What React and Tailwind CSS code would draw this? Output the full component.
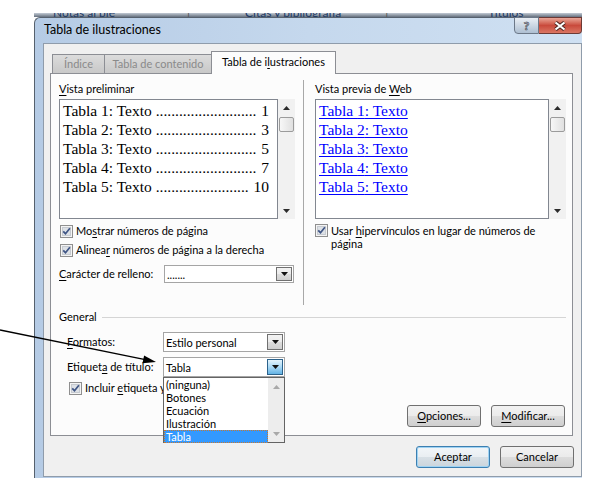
import React from "react";

const btnGray =
  "bg-[linear-gradient(#f2f2f2_0%,#ebebeb_50%,#dddddd_50%,#cfcfcf_100%)]";

const U = ({ children }) => (
  <span className="underline decoration-1 underline-offset-[2px]">{children}</span>
);

function Tri({ up = false, color = "#2b2b2b" }) {
  return (
    <svg width="7" height="4" viewBox="0 0 7 4" className="shrink-0">
      <path d={up ? "M0 4 L3.5 0 L7 4Z" : "M0 0 L7 0 L3.5 4Z"} fill={color} />
    </svg>
  );
}

function Box() {
  return (
    <svg width="13" height="13" viewBox="0 0 13 13" className="shrink-0">
      <rect x="0.5" y="0.5" width="12" height="12" fill="#f4f4f4" stroke="#8f8f8f" />
      <rect x="2.5" y="2.5" width="8" height="8" fill="#dde1e6" stroke="#c6cad0" />
      <path d="M3.2 6.3 L5.5 8.7 L9.9 3.3" fill="none" stroke="#3f5585" strokeWidth="1.7" />
    </svg>
  );
}

function PreviewScroll() {
  return (
    <div className="flex h-[120px] w-[17px] flex-col items-center bg-[#f1f1f1]">
      <div className="flex h-[17px] items-center">
        <Tri up />
      </div>
      <div className="mt-px h-[15px] w-[15px] rounded-[2px] border border-[#9b9b9b] bg-gradient-to-r from-[#f7f7f7] to-[#e0e0e0]" />
      <div className="flex-1" />
      <div className="flex h-[17px] items-center">
        <Tri />
      </div>
    </div>
  );
}

function Combo({ value, active = false, size = "h-[20px] w-[122px]", children }) {
  return (
    <div className={`relative flex ${size} border border-[#a5a5a5] bg-white`}>
      <div className="flex flex-1 items-center pl-[2px] leading-none">{value}</div>
      <div
        className={
          active
            ? "m-px flex w-[16px] items-center justify-center border border-[#2c628b] bg-gradient-to-b from-[#e5f4fc] via-[#a9d9f5] to-[#62b2e4]"
            : `m-px flex w-[16px] items-center justify-center border border-[#707070] ${btnGray}`
        }
      >
        <Tri color="#111" />
      </div>
      {children}
    </div>
  );
}

const pages = [
  ["1", "1", 26],
  ["2", "3", 26],
  ["3", "5", 26],
  ["4", "7", 26],
  ["5", "10", 24],
];

const labels = ["(ninguna)", "Botones", "Ecuación", "Ilustración", "Tabla"];

export default function App() {
  return (
    <div className="relative h-[484px] w-[589px] overflow-hidden bg-white font-['Lato','Liberation_Sans',sans-serif] text-[11px] text-black">
      {/* ribbon of the document window behind the dialog */}
      <div className="ml-[34px] mt-[13px] flex h-[4px] w-[548px] items-start overflow-hidden bg-gradient-to-b from-[#c3cbd5] to-[#66717f] text-[12px] leading-[14px] text-[#1e3a66]">
        <span className="-mt-[7px] ml-[19px]">Notas al pie</span>
        <span className="-mt-[7px] ml-[72px] text-[#555]">|</span>
        <span className="-mt-[7px] ml-[55px]">Citas y bibliografía</span>
        <span className="-mt-[7px] ml-[44px] text-[#555]">|</span>
        <span className="-mt-[7px] ml-[100px]">Títulos</span>
      </div>

      {/* dialog window */}
      <div className="ml-[34px] h-[461px] w-[548px] rounded-tl-[6px] border-l border-t border-[#56616e] bg-gradient-to-r from-[#b5cbe5] via-[#c5d8ed] to-[#cfe0f2]">
        <div className="flex h-[25px] items-start justify-between">
          <div className="self-center pl-[9px] text-[12.5px] leading-none">Tabla de ilustraciones</div>
          <div className="-mt-px flex">
            <div className="flex h-[17px] w-[25px] items-center justify-center rounded-bl-[4px] border border-[#6c7888] bg-gradient-to-b from-[#eaeff5] to-[#aebfd2] text-[12px] font-bold leading-none text-white [-webkit-text-stroke:0.7px_#39424f]">
              ?
            </div>
            <div className="flex h-[17px] w-[43px] items-center justify-center rounded-br-[4px] border border-l-0 border-[#6d3a35] bg-gradient-to-b from-[#e8a597] via-[#c94a3c] to-[#da7563]">
              <svg width="14" height="10" viewBox="0 0 14 10">
                <path d="M2.5 1.5 L11.5 8.5 M11.5 1.5 L2.5 8.5" stroke="#4a2420" strokeWidth="4" />
                <path d="M2.5 1.5 L11.5 8.5 M11.5 1.5 L2.5 8.5" stroke="#fff" strokeWidth="2.2" />
              </svg>
            </div>
          </div>
        </div>

        {/* client area */}
        <div className="ml-[8px] h-[434px] w-[539px] border border-[#8f9cab] bg-[#f0f0f0]">
          <div className="ml-[8px] mt-[7px] flex h-[22px] items-end">
            <div className="flex h-[19px] w-[53px] items-center justify-center border border-b-0 border-[#8c8e94] bg-gradient-to-b from-[#dcdcdc] to-[#c8c8c8] text-[#8a8a8a]">
              Índice
            </div>
            <div className="-ml-px flex h-[19px] w-[108px] items-center justify-center border border-b-0 border-[#8c8e94] bg-gradient-to-b from-[#dcdcdc] to-[#c8c8c8] text-[#8a8a8a]">
              Tabla de contenido
            </div>
            <div className="relative z-10 -mb-px -ml-px flex h-[23px] w-[125px] items-center justify-center border border-b-0 border-[#8c8e94] bg-[#fcfcfc] pb-[2px]">
              <span>
                Tabla de i<U>l</U>ustraciones
              </span>
            </div>
          </div>

          {/* tab panel */}
          <div className="ml-[6px] h-[363px] w-[523px] border border-[#8c8e94] bg-[#fcfcfc] pl-[8px] pt-[6px]">
            <div className="flex h-[225px]">
              {/* print preview */}
              <div className="w-[236px]">
                <div className="h-[18px] leading-[18px]">
                  <U>V</U>ista preliminar
                </div>
                <div className="mt-px flex">
                  <div className="h-[120px] w-[219px] border border-[#828790] bg-white pl-[3px] pr-[8px] pt-px font-['Liberation_Serif',serif] text-[15.5px] leading-[19px]">
                    {pages.map(([n, p, d]) => (
                      <div key={n} className="flex h-[19px] justify-between whitespace-nowrap">
                        <span>
                          Tabla {n}: Texto {".".repeat(d)}
                        </span>
                        <span>{p}</span>
                      </div>
                    ))}
                  </div>
                  <PreviewScroll />
                </div>
                <div className="mt-[3px] flex h-[19px] items-center pl-px">
                  <Box />
                  <span className="ml-[3px]">
                    Mo<U>s</U>trar números de página
                  </span>
                </div>
                <div className="flex h-[19px] items-center pl-px">
                  <Box />
                  <span className="ml-[3px]">
                    Alinea<U>r</U> números de página a la derecha
                  </span>
                </div>
                <div className="mt-[5px] flex items-center">
                  <span className="w-[105px]">
                    <U>C</U>arácter de relleno:
                  </span>
                  <Combo value="......." size="h-[18px] w-[130px]" />
                </div>
              </div>

              <div className="ml-[8px] w-px bg-[#a8a8a8]" />

              {/* web preview */}
              <div className="ml-[11px] w-[251px]">
                <div className="h-[18px] leading-[18px]">
                  Vista previa de <U>W</U>eb
                </div>
                <div className="mt-px flex">
                  <div className="h-[120px] w-[234px] border border-[#828790] bg-white pl-[3px] pt-px font-['Liberation_Serif',serif] text-[15.5px] leading-[19px]">
                    {pages.map(([n]) => (
                      <div key={n} className="h-[19px]">
                        <span className="text-[#0000ff] underline decoration-1 underline-offset-[2px]">
                          Tabla {n}: Texto
                        </span>
                      </div>
                    ))}
                  </div>
                  <PreviewScroll />
                </div>
                <div className="mt-[5px] flex items-start">
                  <Box />
                  <span className="ml-[3px] leading-[13px]">
                    Usar <U>h</U>ipervínculos en lugar de números de
                    <br />
                    página
                  </span>
                </div>
              </div>
            </div>

            {/* General */}
            <div className="mt-[4px] flex h-[16px] items-center pr-[6px]">
              <span>General</span>
              <div className="ml-[5px] h-px flex-1 bg-[#d5d5d5]" />
            </div>
            <div className="mt-[7px] flex items-center pl-[8px]">
              <span className="w-[96px]">
                <U>F</U>ormatos:
              </span>
              <Combo value="Estilo personal" />
            </div>
            <div className="relative z-20 mt-[5px] flex items-center pl-[8px]">
              <span className="w-[96px]">
                Etiquet<U>a</U> de título:
              </span>
              <Combo value="Tabla" active>
                <div className="absolute left-[-1px] top-[19px] flex h-[66px] w-[122px] border border-[#646464] bg-white">
                  <div className="w-[104px]">
                    {labels.map((l) =>
                      l === "Tabla" ? (
                        <div
                          key={l}
                          className="h-[13px] border border-dotted border-[#c9782e] bg-[#3399ff] pl-px leading-[11px] text-white"
                        >
                          {l}
                        </div>
                      ) : (
                        <div key={l} className="h-[13px] pl-[2px] leading-[13px]">
                          {l}
                        </div>
                      )
                    )}
                  </div>
                  <div className="flex w-[16px] flex-col items-center bg-[#ededed]">
                    <div className="flex h-[17px] items-center">
                      <Tri up color="#a9a9a9" />
                    </div>
                    <div className="flex-1" />
                    <div className="flex h-[17px] items-center">
                      <Tri color="#a9a9a9" />
                    </div>
                  </div>
                </div>
              </Combo>
            </div>
            <div className="mt-[5px] flex h-[13px] items-center pl-[10px]">
              <Box />
              <span className="ml-[3px] whitespace-nowrap">
                Incluir <U>e</U>tiqueta y
              </span>
            </div>
            <div className="mt-[10px] flex justify-end gap-[10px] pr-[7px]">
              <div className={`flex h-[22px] w-[74px] items-center justify-center rounded-[3px] border border-[#707070] ${btnGray}`}>
                <span>
                  <U>O</U>pciones...
                </span>
              </div>
              <div className={`flex h-[22px] w-[74px] items-center justify-center rounded-[3px] border border-[#707070] ${btnGray}`}>
                <span>
                  <U>M</U>odificar...
                </span>
              </div>
            </div>
          </div>

          <div className="mt-[10px] flex justify-end gap-[10px] pr-[7px]">
            <div className="flex h-[22px] w-[74px] items-center justify-center rounded-[3px] border border-[#3c7fb1] bg-[linear-gradient(#f2f6f9_0%,#e9eef2_50%,#d8e0e6_50%,#cbd5dc_100%)] shadow-[inset_0_0_0_1px_#9fd3f3]">
              Aceptar
            </div>
            <div className={`flex h-[22px] w-[74px] items-center justify-center rounded-[3px] border border-[#707070] ${btnGray}`}>
              Cancelar
            </div>
          </div>
        </div>
      </div>

      {/* annotation arrow drawn over the screenshot */}
      <svg className="pointer-events-none absolute left-0 top-0 z-30" width="589" height="484">
        <line x1="0" y1="330" x2="144" y2="359.4" stroke="#000" strokeWidth="1.4" />
        <polygon points="156,362 142.5,363.3 144.1,355.5" fill="#000" />
      </svg>
    </div>
  );
}
